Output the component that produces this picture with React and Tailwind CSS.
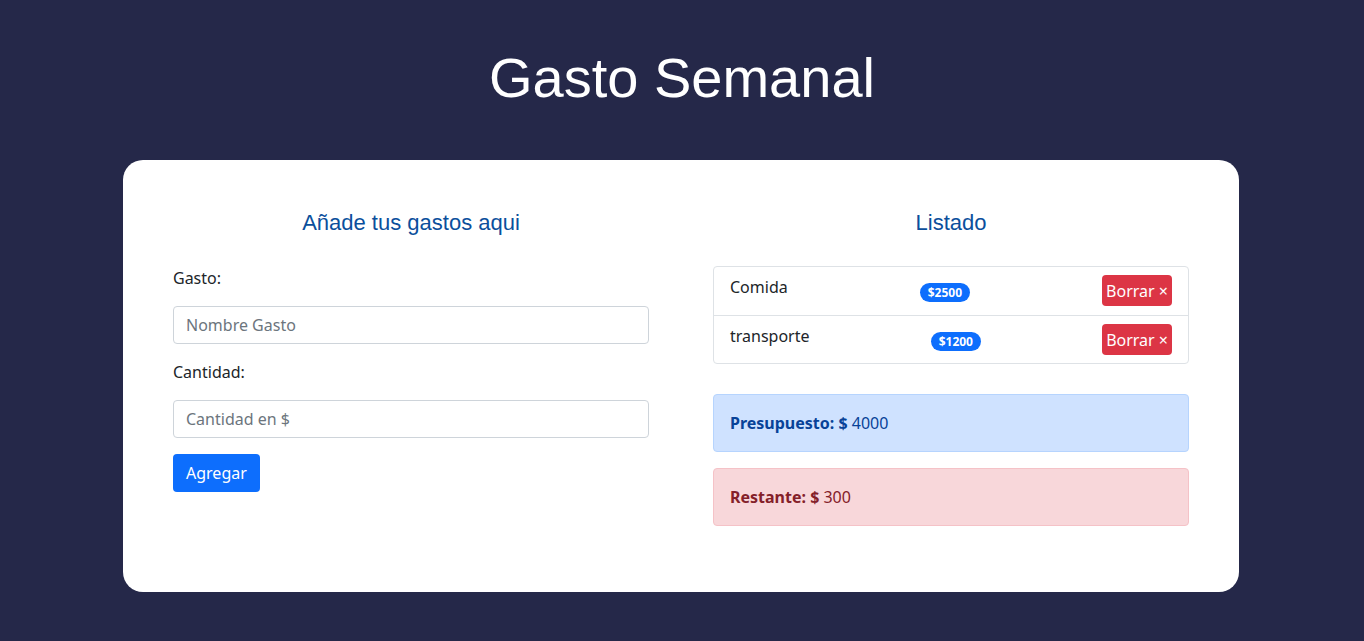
export default function App() {
  const items = [
    { name: "Comida", amount: 2500 },
    { name: "transporte", amount: 1200 },
  ];
  return (
    <div className="min-h-[641px] bg-[#252849] pt-[44px] pb-[49px] font-['Noto_Sans',sans-serif] text-[16px] text-[#212529]">
      <h1 className="text-center font-['Liberation_Sans',Arial,sans-serif] text-[56px] leading-[1.2] text-white mb-[49px]">
        Gasto Semanal
      </h1>
      <div className="ml-[123px] w-[1116px] rounded-[20px] bg-white p-[50px]">
        <div className="grid grid-cols-2 gap-[64px]">
          <div>
            <h2 className="text-center font-['Liberation_Sans',Arial,sans-serif] text-[22px] leading-[26px] text-[#0b4f9c]">
              Añade tus gastos aqui
            </h2>
            <form className="mt-[30px] flex flex-col">
              <label className="leading-[24px]">Gasto:</label>
              <input
                className="mt-[16px] h-[38px] w-full rounded-[4px] border border-[#ced4da] px-[12px] leading-[24px] placeholder:text-[#6c757d] outline-none"
                placeholder="Nombre Gasto"
              />
              <label className="mt-[16px] leading-[24px]">Cantidad:</label>
              <input
                className="mt-[16px] h-[38px] w-full rounded-[4px] border border-[#ced4da] px-[12px] leading-[24px] placeholder:text-[#6c757d] outline-none"
                placeholder="Cantidad en $"
              />
              <div className="mt-[16px]">
                <button
                  type="button"
                  className="h-[38px] rounded-[4px] bg-[#0d6efd] px-[13px] leading-[24px] text-white"
                >
                  Agregar
                </button>
              </div>
            </form>
          </div>
          <div>
            <h2 className="text-center font-['Liberation_Sans',Arial,sans-serif] text-[22px] leading-[26px] text-[#0b4f9c]">
              Listado
            </h2>
            <ul className="mt-[30px] rounded-[4px] border border-[#dee2e6]">
              {items.map((it, i) => (
                <li
                  key={it.name}
                  className={`flex items-start justify-between px-[16px] pt-[8px] ${i > 0 ? "border-t border-[#dee2e6] pb-[8px]" : "pb-[9px]"}`}
                >
                  <span className="leading-[24px]">{it.name}</span>
                  <span className="mt-[8px] rounded-full bg-[#0d6efd] px-[8px] py-[3px] text-[12px] font-bold leading-[13px] text-white">
                    ${it.amount}
                  </span>
                  <button
                    type="button"
                    className="h-[31px] rounded-[4px] bg-[#dc3545] px-[4px] leading-[24px] text-white"
                  >
                    Borrar ×
                  </button>
                </li>
              ))}
            </ul>
            <div className="mt-[30px] rounded-[4px] border border-[#b6d4fe] bg-[#cfe2ff] px-[16px] py-[16px] leading-[24px] text-[#084298]">
              <strong className="font-bold">Presupuesto: $</strong> 4000
            </div>
            <div className="mt-[16px] mb-[16px] rounded-[4px] border border-[#f5c2c7] bg-[#f8d7da] px-[16px] py-[16px] leading-[24px] text-[#842029]">
              <strong className="font-bold">Restante: $</strong> 300
            </div>
          </div>
        </div>
      </div>
    </div>
  );
}
